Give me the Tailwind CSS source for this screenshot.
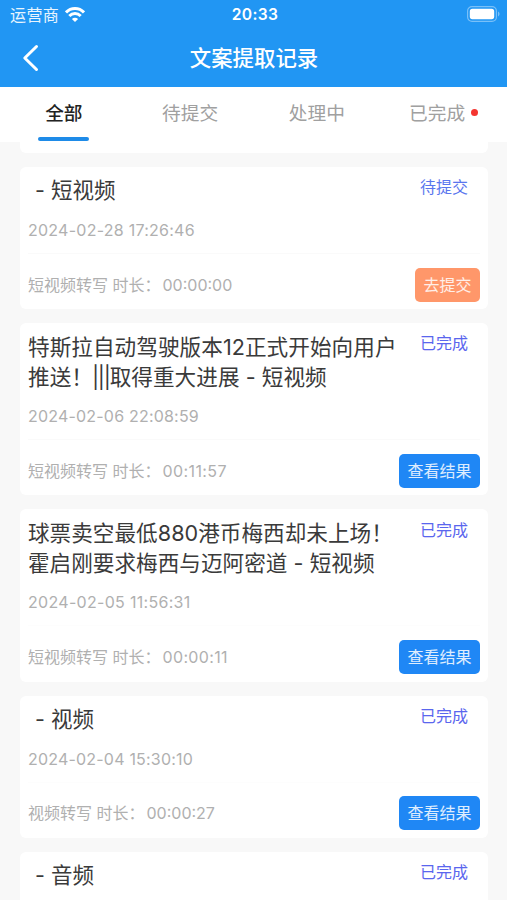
<!DOCTYPE html>
<html lang="zh-CN">
<head>
<meta charset="utf-8">
<meta name="viewport" content="width=device-width, initial-scale=1">
<title>文案提取记录</title>
<script src="https://cdn.jsdelivr.net/npm/@tailwindcss/browser@4"></script>
</head>
<body class="h-[900px] overflow-hidden bg-[#f8f8f8] font-['Inter','Noto_Sans_CJK_SC',sans-serif]">
<div class="flex h-[900px] flex-col overflow-hidden">
  <header class="h-[87px] shrink-0 bg-[#2196f3] text-white">
    <div class="grid h-[29px] grid-cols-3 items-center pl-[10px] pr-[7px]">
      <div class="flex items-center gap-[6px] pt-[1px] text-[16px] leading-[28px] tracking-[0.4px] text-white/90">
        <span>运营商</span>
        <svg class="-mt-[2px] h-[15px] w-[20px]" viewBox="0 0 20 15" fill="none" stroke="white" stroke-width="3">
          <path d="M1 5.4C6 .2 14 .2 19 5.4"/>
          <path d="M4.3 9c3.2-3.2 8.2-3.2 11.4 0"/>
          <path d="M10 14.9 6.9 11.9c1.8-1.6 4.4-1.6 6.2 0z" fill="white" stroke="none"/>
        </svg>
      </div>
      <div class="text-center text-[15.6px] font-semibold tracking-[0.3px]">20:33</div>
      <svg class="-mt-[2px] h-[16px] w-[33px] justify-self-end" viewBox="0 0 33 16" fill="none">
        <rect x=".6" y=".6" width="28.8" height="14.8" rx="4.4" stroke="white" stroke-opacity=".4" stroke-width="1.2"/>
        <rect x="2.8" y="2.8" width="24.4" height="10.4" rx="2.6" fill="white"/>
        <path d="M31 5.6c2 .8 2 4 0 4.8z" fill="white" fill-opacity=".4"/>
      </svg>
    </div>
    <div class="grid h-[58px] grid-cols-[60px_1fr_60px] items-center">
      <svg class="ml-[22px] h-[28px] w-[17px]" viewBox="0 0 17 28" fill="none" stroke="white" stroke-width="3" stroke-linecap="round" stroke-linejoin="round"><path d="M14.5 2.5 2.8 14l11.7 11.5"/></svg>
      <h1 class="pl-[1px] text-center text-[21.4px] font-medium leading-[58px]">文案提取记录</h1>
    </div>
  </header>

  <nav class="z-10 grid h-[55px] shrink-0 grid-cols-4 bg-white text-[18.7px] leading-[53px] text-[#a0a0a0]">
    <div class="flex flex-col items-center pl-[1px]"><span class="h-[50px] font-medium text-[#222]">全部</span><span class="h-[4px] w-[51px] rounded-full bg-[#1e8be8]"></span></div>
    <div class="text-center">待提交</div>
    <div class="text-center">处理中</div>
    <div class="flex items-start justify-center gap-[6px]"><span>已完成</span><span class="mt-[22px] size-[7px] rounded-full bg-[#f43530]"></span></div>
  </nav>

  <main class="flex flex-col gap-[14px] pl-[20px] pr-[19px]">
    <div class="h-[11px] shrink-0 rounded-b-[6px] bg-white"></div>

    <article class="h-[142.2px] shrink-0 rounded-[6px] bg-white px-[8px] pt-[8px]">
      <div class="flex justify-between"><h2 class="w-[380px] whitespace-pre-wrap pl-[1px] text-[21.5px] leading-[30px] text-[#3a3a3a]"> - 短视频</h2><span class="mr-[12px] text-[16px] leading-[24px] text-[#5a76ee]">待提交</span></div>
      <time class="mt-[14px] block text-[16px] leading-[22px] tracking-[0.25px] text-[#b0b0b0]">2024-02-28 17:26:46</time>
      <div class="mt-[12px] flex h-[49px] items-end justify-between border-t border-[#fafafa]"><p class="text-[16px] leading-[33px] text-[#b0b0b0]">短视频转写 时长：<span class="ml-[2px]">00:00:00</span></p><button class="h-[34px] w-[65px] rounded-[5px] bg-[#ff976a] text-[16px] leading-[34px] text-white/85">去提交</button></div>
    </article>

    <article class="h-[172px] shrink-0 rounded-[6px] bg-white px-[8px] pt-[9px]">
      <div class="flex justify-between"><h2 class="w-[380px] whitespace-pre-wrap text-[21.6px] leading-[30px] tracking-[0.06px] text-[#3a3a3a]">特斯拉自动驾驶版本12正式开始向用户<br>推送！<span class="-ml-[1px] tracking-[-1.3px]">|||</span>取得重大进展 - 短视频</h2><span class="-mt-px mr-[12px] text-[16px] leading-[24px] text-[#5a66ee]">已完成</span></div>
      <time class="mt-[13px] block text-[16px] leading-[22px] tracking-[0.2px] text-[#b0b0b0]">2024-02-06 22:08:59</time>
      <div class="mt-[12px] flex h-[49px] items-end justify-between border-t border-[#fafafa]"><p class="text-[16px] leading-[33px] text-[#b0b0b0]">短视频转写 时长：<span class="ml-[2px] tracking-[0.4px]">00:11:57</span></p><button class="h-[34px] w-[81px] rounded-[5px] bg-[#1f87f5] text-[16px] leading-[34px] text-white/85">查看结果</button></div>
    </article>

    <article class="h-[172.6px] shrink-0 rounded-[6px] bg-white px-[8px] pt-[9px]">
      <div class="flex justify-between"><h2 class="w-[380px] whitespace-pre-wrap text-[21.6px] leading-[30px] tracking-[0.03px] text-[#3a3a3a]">球票卖空最低880港币梅西却未上场！<br>霍启刚要求梅西与迈阿密道 - 短视频</h2><span class="mr-[12px] text-[16px] leading-[24px] text-[#5a66ee]">已完成</span></div>
      <time class="mt-[13px] block text-[16px] leading-[22px] tracking-[0.3px] text-[#b0b0b0]">2024-02-05 11:56:31</time>
      <div class="mt-[12px] flex h-[49px] items-end justify-between border-t border-[#fdfdfd]"><p class="text-[16px] leading-[33px] text-[#b0b0b0]">短视频转写 时长：<span class="ml-[2px] tracking-[0.35px]">00:00:11</span></p><button class="h-[34px] w-[81px] rounded-[5px] bg-[#1f87f5] text-[16px] leading-[34px] text-white/85">查看结果</button></div>
    </article>

    <article class="h-[142.2px] shrink-0 rounded-[6px] bg-white px-[8px] pt-[8px]">
      <div class="flex justify-between"><h2 class="w-[380px] whitespace-pre-wrap pl-[1px] text-[21.5px] leading-[30px] text-[#3a3a3a]"> - 视频</h2><span class="mr-[12px] text-[16px] leading-[24px] text-[#5a66ee]">已完成</span></div>
      <time class="mt-[14px] block text-[16px] leading-[22px] tracking-[0.2px] text-[#b0b0b0]">2024-02-04 15:30:10</time>
      <div class="mt-[12px] flex h-[48.6px] items-end justify-between border-t border-[#fdfdfd]"><p class="text-[16px] leading-[33px] text-[#b0b0b0]">视频转写 时长：<span class="ml-[2px]">00:00:27</span></p><button class="h-[34px] w-[81px] rounded-[5px] bg-[#1f87f5] text-[16px] leading-[34px] text-white/85">查看结果</button></div>
    </article>

    <article class="h-[142.2px] shrink-0 rounded-[6px] bg-white px-[8px] pt-[8px]">
      <div class="flex justify-between"><h2 class="w-[380px] whitespace-pre-wrap pl-[1px] text-[21.5px] leading-[30px] text-[#3a3a3a]"> - 音频</h2><span class="mr-[12px] text-[16px] leading-[24px] text-[#5a66ee]">已完成</span></div>
    </article>
  </main>
</div>
</body>
</html>
